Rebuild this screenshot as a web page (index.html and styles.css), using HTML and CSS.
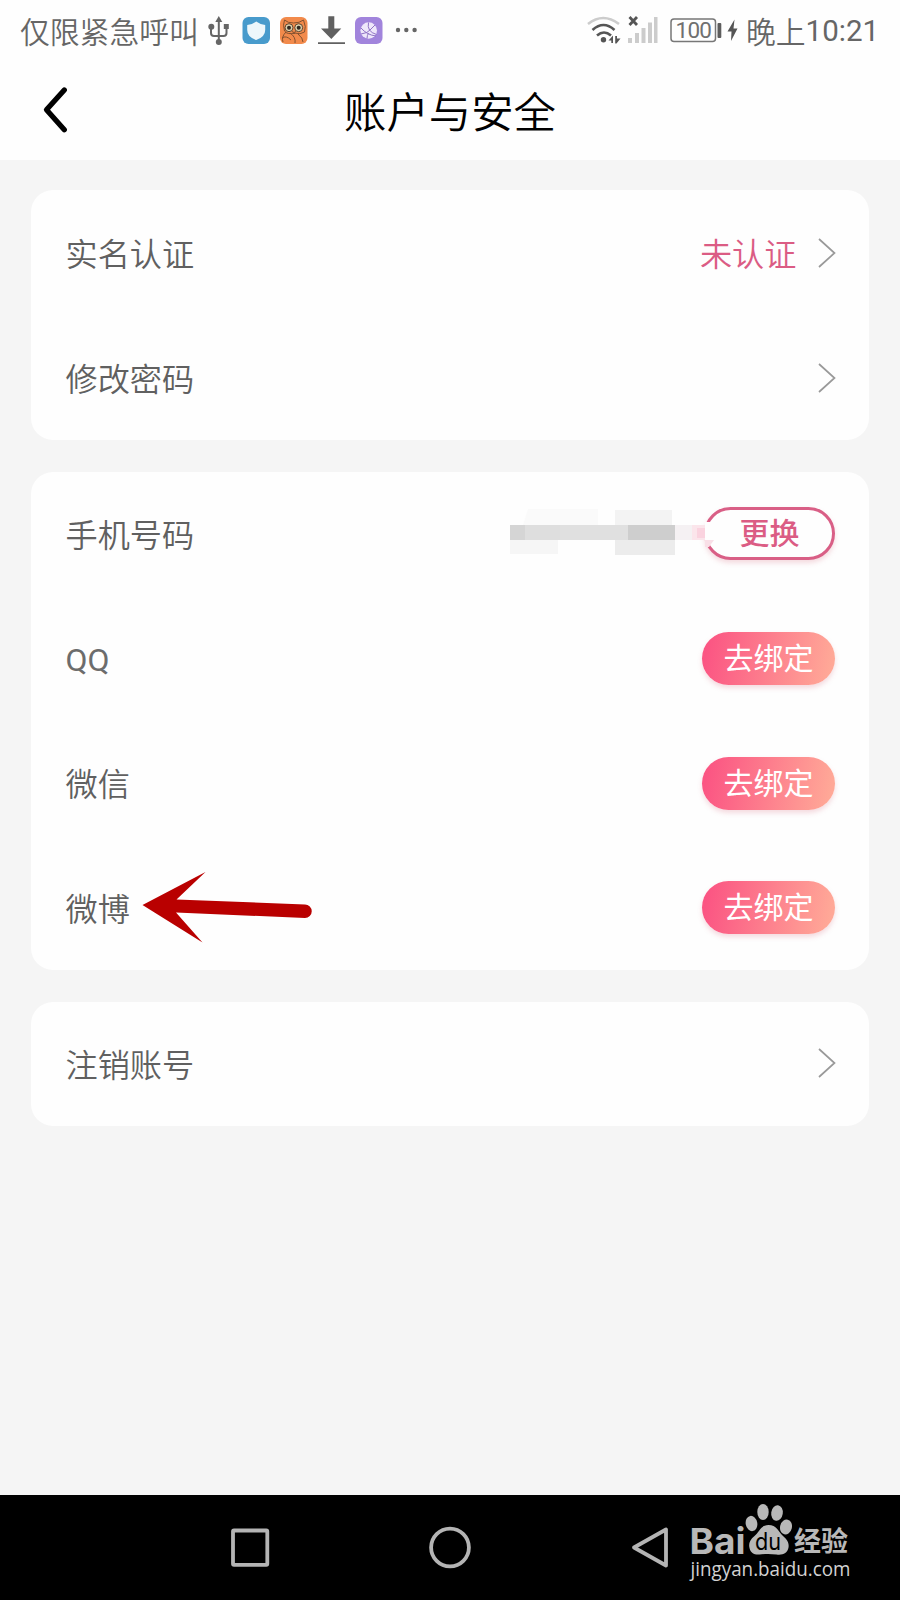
FILE: index.html
```html
<!DOCTYPE html>
<html lang="zh-CN">
<head>
<meta charset="utf-8">
<title>账户与安全</title>
<link rel="stylesheet" href="styles.css">
</head>
<body>
<div class="screen">
  <div class="status">
    <span class="carrier">仅限紧急呼叫</span>
    <svg class="status-icons" width="220" height="40" viewBox="205 10 220 40">
      <g fill="none" stroke="#666" stroke-width="2"><path d="M218.800 19V42M211 28v5q0 3 3 3h9.500q3 0 3-3v-5"/></g>
      <g fill="#666"><path d="M218.800 16l3.500 6h-7z"/><circle cx="218.800" cy="42" r="3"/><circle cx="211.300" cy="26.700" r="3"/><rect x="223.800" y="24" width="5" height="5"/></g>
      <rect x="242.500" y="17" width="27.500" height="27" rx="6" fill="#489bcc"/>
      <path d="M256.200 21.500q4 3 9 3.500v5q0 7-9 10-9-3-9-10v-5q5-.5 9-3.500z" fill="#edf7fb"/>
      <rect x="280" y="17" width="27.500" height="27" rx="6" fill="#f28a4b"/>
      <g fill="none" stroke="#82512f" stroke-width="1"><path d="M284.500 20q3 3 9 3t10-3q3 7 1 12-4 3-10 1-7 2-10-2-2-6 0-11zM286 32q-5 5-3 10M290 33q6 4 5 10M282 38q4-3 9 2M298 34q5 4 5 8"/><path d="M292.500 31l1.500 3 1.500-3"/></g>
      <g fill="#ddd0ac" stroke="#60442d"><circle cx="289" cy="27.700" r="4"/><circle cx="298.700" cy="27.700" r="4"/></g>
      <g fill="#302820"><circle cx="289" cy="27.700" r="2"/><circle cx="298.700" cy="27.700" r="2"/></g>
      <path d="M328.300 16.300h6v12.200h7L331.300 39 321 28.500h7.300zM318 42.300h27v1.700h-27z" fill="#606060"/>
      <rect x="355" y="17" width="27.500" height="27" rx="6" fill="#a184dc"/>
      <circle cx="368.700" cy="30.500" r="8.300" fill="#eee7fa"/>
      <g fill="none" stroke="#8f72c4" stroke-width="1"><path d="M368.500 22.500q-2 9 8 12M361 28q6 7 15 8M361 34q7-1 9-4l5-5M367 38.500q0-3 1.500-5.500"/></g>
      <g fill="#666"><circle cx="398" cy="30" r="2.200"/><circle cx="406.300" cy="30" r="2.200"/><circle cx="414.600" cy="30" r="2.200"/></g>
    </svg>
    <svg class="signal-icons" width="155" height="40" viewBox="585 10 155 40">
      <g fill="none" stroke-width="2.600"><path d="M588 24q15-12 31 0" stroke="#ccc"/><path d="M592.500 30q11-10 22 0M597 35.500q7-6 14 0" stroke="#555"/></g>
      <circle cx="603.500" cy="39.700" r="2.700" fill="#555"/>
      <path d="M608.500 40.500l4.500-5V43h-1.700v-2.500zM615.200 36h1.800v2.500h3.500l-4 5h-1.300z" fill="#555"/>
      <path d="M629.500 17l7.500 8m0-8l-7.500 8" stroke="#555" stroke-width="2.800"/>
      <path d="M628 38h4v5h-4zM635 33h4v10h-4zM641.500 28h4v15h-4zM648 22.500h4V43h-4zM654 17h3.500v26H654z" fill="#ccc"/>
      <rect x="671" y="19" width="44.500" height="22.500" rx="3" fill="none" stroke="#777" stroke-width="1.500"/>
      <text x="675.500" y="38.200" class="battery" textLength="36.500">100</text>
      <rect x="717.500" y="23" width="3.800" height="15" rx="1" fill="#5d5d5d"/>
      <path d="M734.500 19.500L727.500 31.500h4L731 41l6.500-12.500h-4z" fill="#555"/>
    </svg>
    <span class="clock">晚上<span class="clock-digits">10:21</span></span>
  </div>
  <header class="title-bar">
    <svg class="back" width="30" height="52" viewBox="40 84 30 52"><path d="M64.300 90L46.500 109.700 64.300 129.700" fill="none" stroke="#000" stroke-width="5.300" stroke-linecap="round" stroke-linejoin="round"/></svg>
    <h1 class="title">账户与安全</h1>
  </header>
  <main class="content">
    <section class="card">
      <div class="row"><span class="label">实名认证</span><span class="value"><span class="label">未认证</span><svg class="chevron" viewBox="0 0 20 32"><path d="M2 2l15.500 14L2 30"/></svg></span></div>
      <div class="row"><span class="label">修改密码</span><svg class="chevron" viewBox="0 0 20 32"><path d="M2 2l15.500 14L2 30"/></svg></div>
    </section>
    <section class="card card-bind">
      <div class="row">
        <span class="label">手机号码</span>
        <span class="phone">
          <svg class="mosaic" width="206" height="52" viewBox="508 507 206 52">
            <path d="M528 509h70v16h-75z" fill="#fafafa"/><path d="M615 510h57v15h-57z" fill="#f3f3f3"/>
            <path d="M510 525h50v15h-50z" fill="#dedede"/><path d="M510 525h15v15h-15z" fill="#d5d5d5"/><path d="M560 525h68v15h-68z" fill="#e0e0e0"/><path d="M628 525h47v15h-47z" fill="#cecece"/>
            <path d="M510 540h48v14h-48z" fill="#f6f6f6"/><path d="M615 540h60v15h-60z" fill="#ececec"/>
            <path d="M675 525h17v15h-17z" fill="#f5f1f3"/><path d="M692 525h13v15h-13z" fill="#fbe5eb"/><path d="M697 528h8v10h-8z" fill="#fad3df"/><path d="M705 522h5v18h-5z" fill="#fefefe"/><path d="M705 540h9l-5 7h-4z" fill="#f9dfe7"/>
          </svg>
          <button class="pill change">更换</button>
        </span>
      </div>
      <div class="row"><span class="latin">QQ</span><button class="pill">去绑定</button></div>
      <div class="row"><span class="label">微信</span><button class="pill">去绑定</button></div>
      <div class="row weibo"><span class="label">微博</span><svg class="arrow" width="174" height="76" viewBox="140 869 174 76"><path d="M142.500 905L205.500 872 176.500 899.500 305 904.500a6.700 6.700 0 0 1 0 13.500L176 912.500 202.500 942.500z" fill="#b90000"/></svg><button class="pill">去绑定</button></div>
    </section>
    <section class="card card-close">
      <div class="row"><span class="label">注销账号</span><svg class="chevron" viewBox="0 0 20 32"><path d="M2 2l15.500 14L2 30"/></svg></div>
    </section>
  </main>
  <nav class="nav">
    <svg width="900" height="105" viewBox="0 1495 900 105">
      <g fill="none" stroke="#b4b4b4" stroke-width="3.800" stroke-linejoin="round"><rect x="233" y="1530.500" width="34.300" height="34.300" rx="1"/><circle cx="450" cy="1547.500" r="18.900"/><path d="M666 1529.500v36L634 1547.500z"/></g>
      <g fill="#b8b8b8">
        <text class="brand" x="689.500" y="1553.500" textLength="56" lengthAdjust="spacingAndGlyphs">Bai</text>
        <ellipse cx="751.500" cy="1523.500" rx="5.800" ry="7.700" transform="rotate(-10 751.500 1523.500)"/>
        <ellipse cx="763" cy="1512" rx="5.700" ry="8"/>
        <ellipse cx="777" cy="1513" rx="5.800" ry="7.800" transform="rotate(8 777 1513)"/>
        <ellipse cx="786" cy="1527" rx="5.900" ry="7.500" transform="rotate(14 786 1527)"/>
        <path d="M768.500 1525c-8 0-9 7-14 11-5 4-6 8-5 12 1 5 5 7 10 6.500 6-.8 11-.8 17 0 6 .8 11-1 12-7 1-6-3-9-6-12-4-4-6-10.500-14-10.500z"/>
        <text class="brand-cn" x="794" y="1551" textLength="54" lengthAdjust="spacingAndGlyphs">经验</text>
      </g>
      <text class="site" x="690.500" y="1575.500" textLength="160" lengthAdjust="spacingAndGlyphs">jingyan.baidu.com</text>
      <text class="brand-du" x="755" y="1549.500" textLength="26" lengthAdjust="spacingAndGlyphs">du</text>
    </svg>
  </nav>
</div>
</body>
</html>
```
FILE: styles.css
```css
* { box-sizing: border-box; }
body { margin: 0; font-family: Roboto, "Noto Sans CJK SC", sans-serif; }
.screen { width: 900px; height: 1600px; background: #f5f5f5; display: flex; flex-direction: column; overflow: hidden; }
.status { height: 60px; background: #fefefe; display: flex; align-items: center; padding: 0 0 0 20px; color: #666; font: 350 29.800px/60px "Noto Sans CJK SC", sans-serif; }
.carrier { width: 185px; white-space: nowrap; }
.status-icons { flex: none; }
.signal-icons { flex: none; margin-left: 160px; }
.battery { font: 400 22.500px Roboto, sans-serif; fill: #707070; }
.clock { margin-left: 6px; white-space: nowrap; display: flex; }
.clock-digits { padding-top: 1px; font-family: Roboto, sans-serif; font-size: 29.500px; font-weight: 400; }
.title-bar { height: 100px; background: #fefefe; display: grid; grid-template-columns: 100px 1fr 100px; align-items: center; }
.back { margin-left: 40px; }
.title { margin: 0; text-align: center; font: 350 42.400px/60px "Noto Sans CJK SC", sans-serif; color: #000; }
.content { flex: 1; padding: 30px 31px; display: flex; flex-direction: column; gap: 32px; }
.card { background: #fefefe; border-radius: 22px; padding: 0 32.500px 0 34.500px; }
.card-bind { padding-right: 34px; }
.card-bind .row { height: 124.500px; }
.card-close .row { height: 124px; padding-bottom: 3px; }
.row { height: 125px; display: flex; align-items: center; justify-content: space-between; color: #606060; font: 350 32.200px/48px "Noto Sans CJK SC", sans-serif; position: relative; }
.label { padding-bottom: 2px; }
.card-close .label { padding-bottom: 0; }
.latin { padding-top: 2px; font-family: Roboto, sans-serif; font-size: 32px; font-weight: 400; color: #6c6c6c; }
.value { display: flex; align-items: center; gap: 20px; color: #db5c84; }
.chevron { width: 20px; height: 32px; fill: none; stroke: #999; stroke-width: 1.700; }
.phone { display: flex; align-items: center; padding-bottom: 2px; }
.mosaic { margin-right: -10px; position: relative; }
.pill { width: 133px; height: 53px; margin: 0; padding: 0 0 4px; border: 0; border-radius: 27px; color: #fff; background: linear-gradient(100deg, #fb5583 5%, #ffa897 95%); box-shadow: 0 3px 5px #d8718540; font: 400 30px/49px "Noto Sans CJK SC", sans-serif; }
.change { width: 131px; border: 3px solid #d95f86; color: #db5c84; background: #fefefe; font-weight: 500; line-height: 43px; }
.arrow { position: absolute; left: 74.500px; top: 23px; }
.nav { height: 105px; background: #000; }
.nav svg { display: block; }
.brand { font: 700 35.500px Inter, sans-serif; }
.brand-cn { font: 700 27.500px "Noto Sans CJK SC", sans-serif; }
.brand-du { font: 400 24px Inter, sans-serif; fill: #000; }
.site { font: 400 20px "Open Sans", sans-serif; fill: #d2d2d2; }
```
